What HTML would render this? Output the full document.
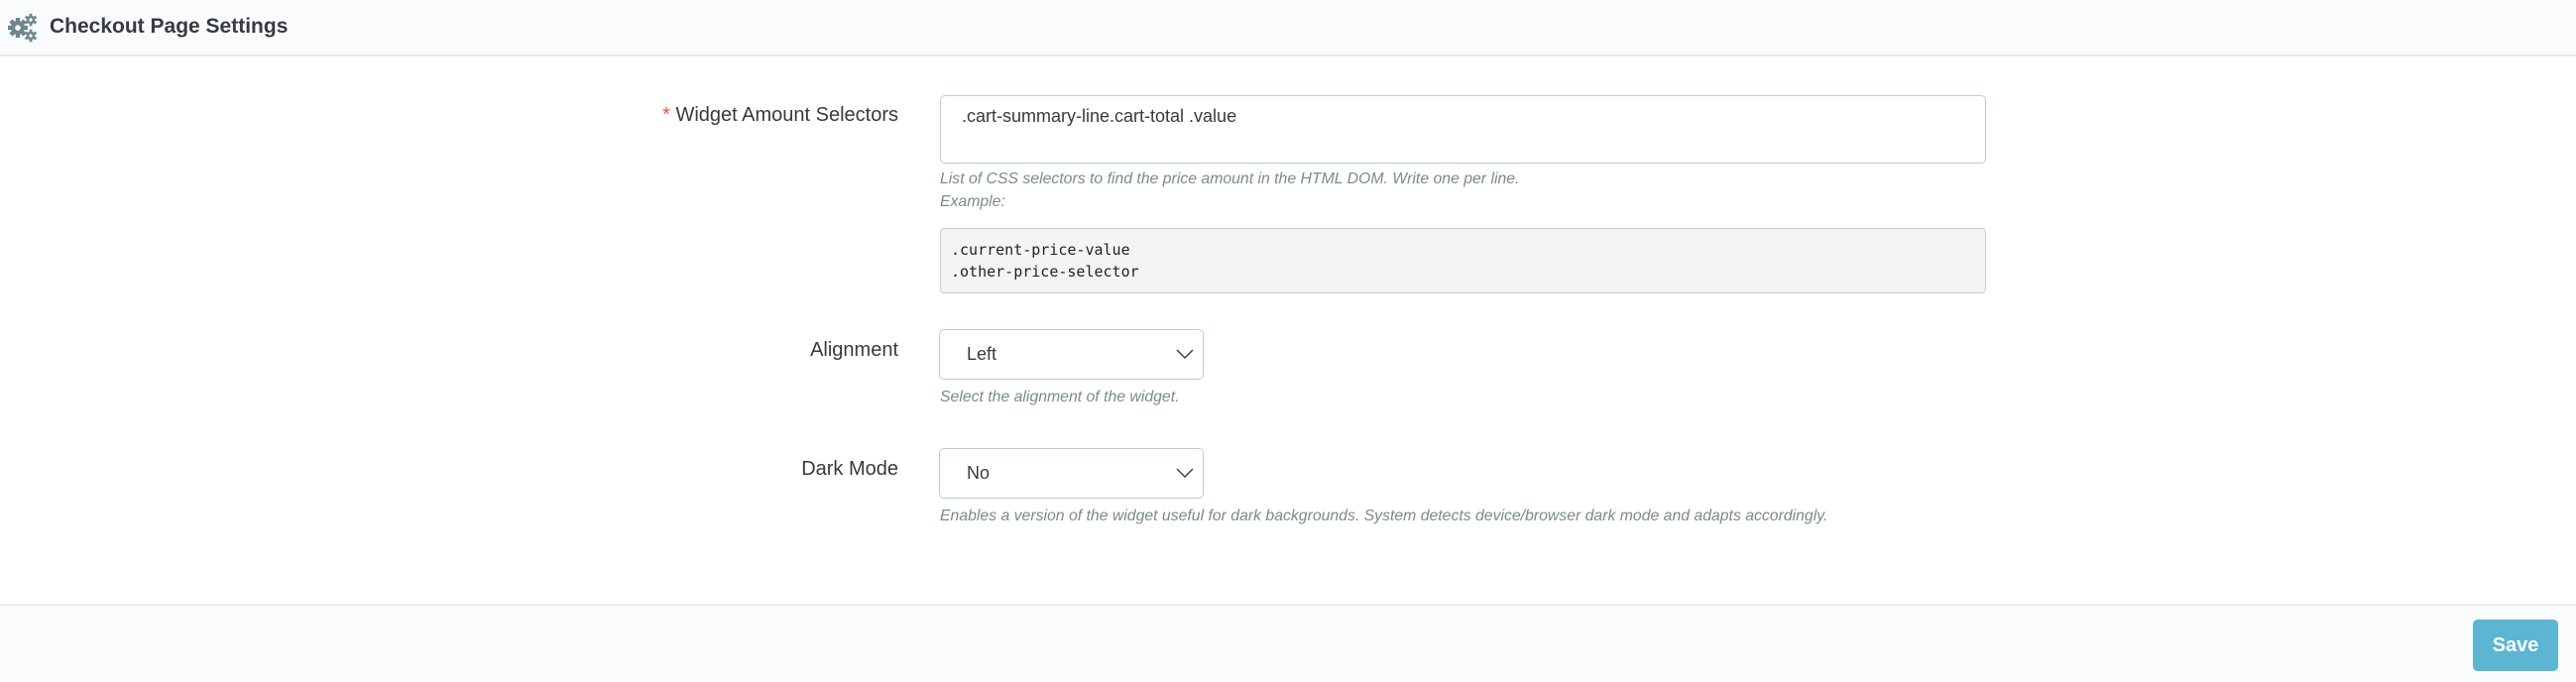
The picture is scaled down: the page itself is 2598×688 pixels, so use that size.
<!DOCTYPE html>
<html><head><meta charset="utf-8"><style>
*{box-sizing:border-box;margin:0;padding:0}
body{width:2598px;height:688px;background:#fff;font-family:"Liberation Sans",sans-serif;color:#363a41;position:relative;overflow:hidden}
.hdr{position:absolute;left:0;top:0;width:2598px;height:57px;background:#fafbfc;border-bottom:2px solid #e3eaec}
.hdr .t{position:absolute;left:50px;top:15px;font-size:21px;font-weight:bold;color:#363a41}
.lbl{position:absolute;right:1692px;font-size:20px;color:#363a41;white-space:nowrap;text-align:right}
.lbl .r{color:#f54c3e}
.box{position:absolute;border:1px solid #bbcdd2;border-radius:5px;background:#fff;font-size:18px;color:#363a41}
.help{position:absolute;left:948px;font-size:15.8px;font-style:italic;color:#7a8a90;white-space:nowrap}
.code{position:absolute;left:948px;top:230px;width:1055px;height:66px;background:#f4f4f4;border:1px solid #ccc;border-radius:4px;font-family:"DejaVu Sans Mono","Liberation Mono",monospace;font-size:15px;color:#222;padding:10px 0 0 10px;line-height:22px}
.chev{position:absolute;right:8px;top:18px}
.ftr{position:absolute;left:0;top:609px;width:2598px;height:79px;background:#fafbfc;border-top:2px solid #e9ecef}
.btn{position:absolute;left:2494px;top:625px;width:86px;height:52px;background:#5bb5d3;border-radius:5px;color:#fff;font-weight:bold;font-size:20px;text-align:center;line-height:52px}
</style></head><body>
<div class="hdr">
<svg style="position:absolute;left:8px;top:13px" width="30" height="30" viewBox="0 0 30 30" fill="#6c868e">
<g transform="translate(10,15)"><circle r="7"/><g><rect x="-2.2" y="-10" width="4.4" height="20"/><rect x="-2.2" y="-10" width="4.4" height="20" transform="rotate(45)"/><rect x="-2.2" y="-10" width="4.4" height="20" transform="rotate(90)"/><rect x="-2.2" y="-10" width="4.4" height="20" transform="rotate(135)"/></g><circle r="2.8" fill="#fafbfc"/></g>
<g transform="translate(23,7)"><circle r="4.2"/><rect x="-1.4" y="-6.3" width="2.8" height="12.6"/><rect x="-1.4" y="-6.3" width="2.8" height="12.6" transform="rotate(60)"/><rect x="-1.4" y="-6.3" width="2.8" height="12.6" transform="rotate(120)"/><circle r="1.7" fill="#fafbfc"/></g>
<g transform="translate(23,23)"><circle r="4.2"/><rect x="-1.4" y="-6.3" width="2.8" height="12.6"/><rect x="-1.4" y="-6.3" width="2.8" height="12.6" transform="rotate(60)"/><rect x="-1.4" y="-6.3" width="2.8" height="12.6" transform="rotate(120)"/><circle r="1.7" fill="#fafbfc"/></g>
</svg>
<div class="t">Checkout Page Settings</div></div>

<div class="lbl" style="top:105px"><span class="r">*</span> Widget Amount Selectors</div>
<div class="box" style="left:948px;top:96px;width:1055px;height:69px;padding:10px 0 0 21px">.cart-summary-line.cart-total .value</div>
<div class="help" style="top:172px">List of CSS selectors to find the price amount in the HTML DOM. Write one per line.</div>
<div class="help" style="top:195px">Example:</div>
<div class="code">.current-price-value<br>.other-price-selector</div>

<div class="lbl" style="top:342px">Alignment</div>
<div class="box" style="left:947px;top:332px;width:267px;height:51px;padding:14px 0 0 27px">Left<svg class="chev" width="20" height="12" viewBox="0 0 20 12"><path d="M2 2 L10 10 L18 2" fill="none" stroke="#363a41" stroke-width="1.4"/></svg></div>
<div class="help" style="top:392px">Select the alignment of the widget.</div>

<div class="lbl" style="top:462px">Dark Mode</div>
<div class="box" style="left:947px;top:452px;width:267px;height:51px;padding:14px 0 0 27px">No<svg class="chev" width="20" height="12" viewBox="0 0 20 12"><path d="M2 2 L10 10 L18 2" fill="none" stroke="#363a41" stroke-width="1.4"/></svg></div>
<div class="help" style="top:512px">Enables a version of the widget useful for dark backgrounds. System detects device/browser dark mode and adapts accordingly.</div>

<div class="ftr"></div>
<div class="btn">Save</div>
</body></html>
